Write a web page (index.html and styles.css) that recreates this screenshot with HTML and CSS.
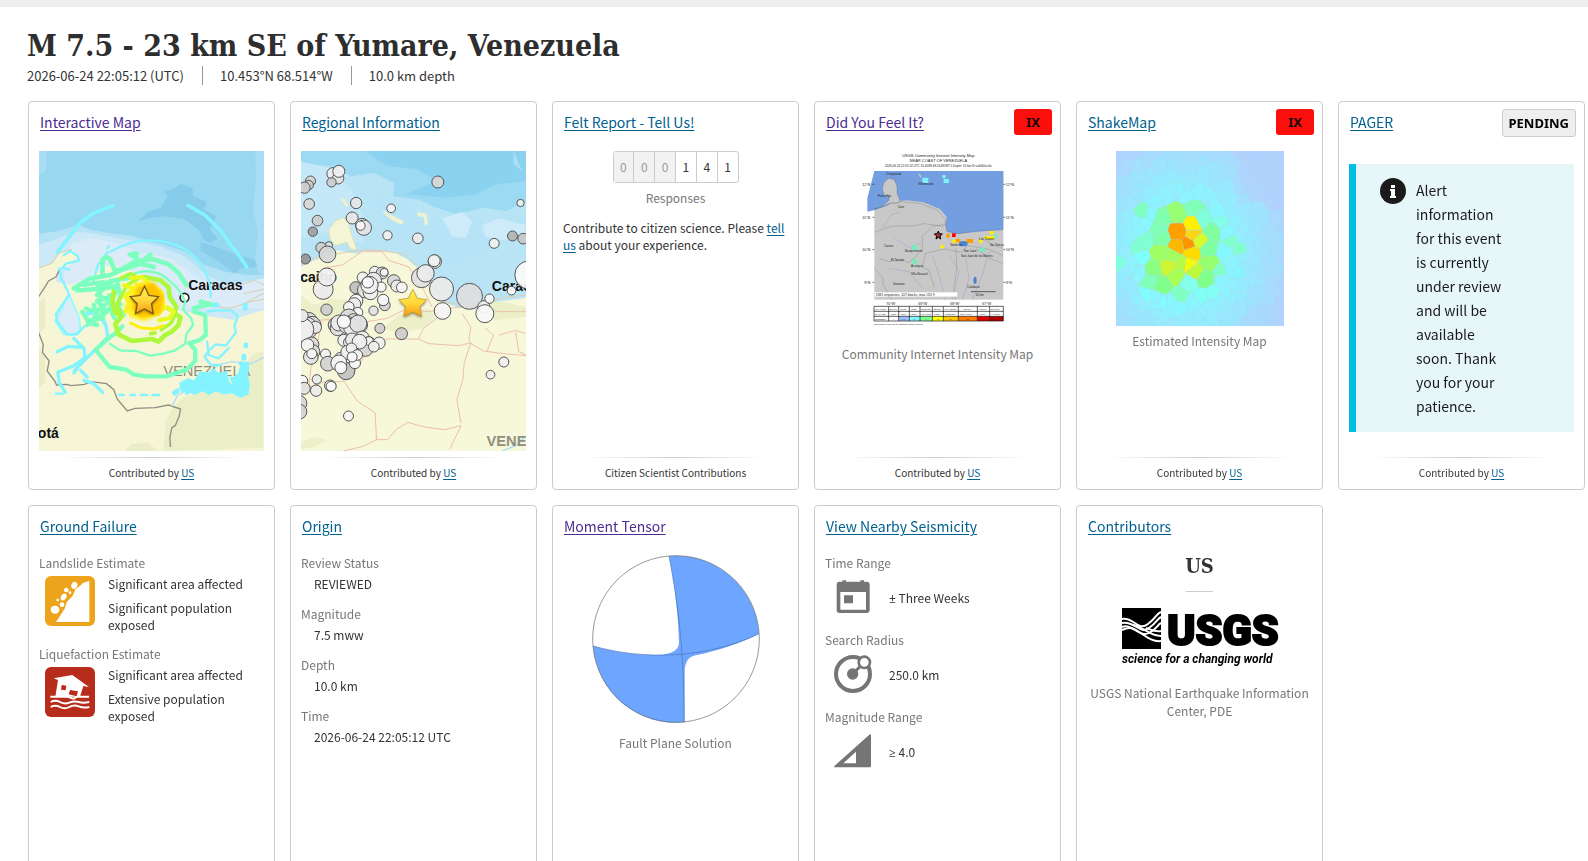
FILE: index.html
```
<!DOCTYPE html>
<html lang="en">

<head>
    <meta charset="UTF-8">
    <meta name="viewport" content="width=device-width, initial-scale=1.0">
    <title>M 7.5 - 23 km SE of Yumare, Venezuela</title>
    <link rel="stylesheet" href="styles.css">
</head>

<body>
    <div class="top-bar"></div>

    <header class="event-header">
        <h1>M 7.5 - 23 km SE of Yumare, Venezuela</h1>
        <ul class="event-details">
            <li>2026-06-24 22:05:12 (UTC)</li>
            <li>10.453°N 68.514°W</li>
            <li>10.0 km depth</li>
        </ul>
    </header>

    <main class="cards">
        <section class="card">
            <div class="card-header"><a class="visited" href="#map">Interactive Map</a></div>
            <div class="card-content">
                <svg class="map" viewBox="54 168 678 900" preserveAspectRatio="xMidYMid slice">
                    <defs>
                        <linearGradient id="star-fill" x1="0" y1="0" x2="0" y2="1">
                            <stop offset="0" stop-color="#fff04a" />
                            <stop offset="0.5" stop-color="#ffd83c" />
                            <stop offset="1" stop-color="#f79a10" />
                        </linearGradient>
                        <filter id="soft" x="-50%" y="-50%" width="200%" height="200%">
                            <feGaussianBlur stdDeviation="5" />
                        </filter>
                    </defs>
                    <rect x="54" y="168" width="678" height="900" fill="#98d7f0" />
                    <!-- sea depth -->
                    <path d="M54 168h26l-4 60-22 10z M705 168h27v400l-30-60 10-100-14-60 8-90z" fill="#a9ddf3" />
                    <path d="M352 380l30-30 40-12 18-32-8-16 30-10 20-14 34 14 2 24 40 16-8 24 38 20-20 40 24 26-22 14-20-10-14-28-44-34-60-8-50 6z" fill="#86cbea" />
                    <path d="M540 440l60 20 60 24 44 10 8 22-50 4-20 18-50-40-52-30z" fill="#8acdeb" />
                    <path d="M54 416l60-8 60-18 30 12 60 12 70 8 60 18 40 10 60 20 60 40 60 20 70 10 48 0v100H54z" fill="#b5e2f5" />
                    <path d="M54 450l60-20 50-20 50 4 70 14 80 14 60 14 70 30 60 50 60 30 70 0 48-6v120H54z" fill="#cde8f7" />
                    <path d="M130 540l20-90 60-20 60 10 90 30 90 20 80 60 80 30 60-20 62-10v90H160z" fill="#dcebf8" />
                    <!-- land -->
                    <path d="M54 520l40-16 22-30 40-10 20 22-30 26-36 8-4 40 40 10 40-12 50-30 20-16 36 2 60 20 60 36 26 44 24 28 60 14 60 10 56 8 60-20 34-10V1068H54z" fill="#f6f6d6" />
                    <path d="M428 1068l8-90 20-40 30-30 60-20 60-10 50-40 40-60 32-10v290z" fill="#ebefc8" />
                    <path d="M54 760l20 20 0 80-20 20z M54 620l20-10 0 90-20 14z M312 1068l20-20 50-6 30 26z" fill="#eaedc8" />
                    <path d="M54 520l42-16 20-30 38-12M660 570l40-14 32 14M670 596l62-14M680 620l52-26M580 634l50 6 60-20 42-8" fill="none" stroke="#d9cdb0" stroke-width="3" />
                    <path d="M54 606l22-34 8-14 22-12 14-26M54 712l14 36-2 24 20 26-6 30 24 32 4 10 30-2 14 4 40-4 20-8 46 6 22 18 10 28 30 36 24-8 60-2 40-8 36 12-4 22-12 28-10 6-6 30 2 28" fill="none" stroke="#8e8e84" stroke-width="4" />
                    <path d="M146 598l30 70 4 34-20 18-30-2-26-40 26-50z" fill="#dcebf8" stroke="#8ff" stroke-width="5" />
                    <path d="M732 786l-40 20-60-6-40 10-60 60-60 30-18 34" fill="none" stroke="#b4dcf0" stroke-width="4" />
                    <text class="map-label" x="503" y="586" font-size="42">Caracas</text>
                    <circle cx="492" cy="608" r="13" fill="#fff" stroke="#222" stroke-width="5" />
                    <text class="map-label" x="52" y="1029" font-size="42">otá</text>
                    <text class="country-label" x="428" y="842" font-size="44">VENEZUELA</text>
                    <!-- intensity contours -->
                    <g fill="none" stroke-linecap="round" stroke-linejoin="round">
                        <g stroke="#83f4ff">
                            <path d="M110 472l36-46 30-40 40-30 60-24M503 332l50 28 50 50 24 36 22 26 30 44" stroke-width="11" />
                            <path d="M270 470q60-36 120-34 100 2 150 70 34 50 30 100M262 470l-30 40-16 60M118 520l4 30 24 48-40 60 4 20 30 40 30 0 20-22 30-16 40-30M130 480l20-12 20 14 6 14-40 10-10 12 20 6M260 460l6-8" stroke-width="7" />
                            <path d="M196 660l30-10 30 40 6 36-40 40-60 60M170 820l-10 14M110 770l34-16 46 4 4 30-34 24-48 20 4 30 18 30M160 730l30 30M180 826l20 20M190 856l30 10 26 26" stroke-width="10" />
                            <path d="M560 650l30-4 40 0 22 16-10 30 4 20-30 40-30-4-20 18-14 20 20 24 30 0M560 740l4 40 30 10 30-30M296 900h14M330 900h14M360 900h20M396 900h20M106 896h20M200 650l50 20 10 40" stroke-width="7" />
                            <path d="M462 894l8-6M484 880l16-12M500 892l20-10M676 750v2M670 784v6M662 806l8 4M640 856l10-10M674 630v10M580 630h10" stroke-width="15" />
                        </g>
                        <path d="M484 890l-6-26 24-12 20 6 16-26 30 2 8-12 20 14 22-6 6 30 16 20-10 14-24 2-20-10-20 12-20-12-24 12-16-10zM630 890l8-24-10-20 22 6 8-30 8-20 18 0 0 20 -4 20 6 26-4 30-24 8z" fill="#83f4ff" stroke="#83f4ff" stroke-width="4" />
                        <g stroke="#7dffc0">
                            <path d="M246 540l0-46 12-8 10 6 16 36 20-6 40-22 50-8 50 16 30 26 24 36M340 476h10M376 490l14-10M540 620l30 8-24 4-26 8M328 478l20 10" stroke-width="14" />
                            <path d="M160 580l50-30 60-10 30-14 60-20 40 10M170 586l60-4 40-24 60-10M230 600l20-20 36-6-10 30-46 14 20 20-10 30 30-30 30-10M210 680l20-20-10-30M186 650l20 34 24 6" stroke-width="14" />
                            <path d="M230 570l40-6 16 30-30 20-20-14M190 570l60-10M196 640l30 10 40-30 20 24M200 690l24-16 24-4M290 560l10 40-10 30 20 30M266 600l10 60 14 20" stroke-width="12" />
                            <path d="M520 650l34 10 2 60-20 16-30 8 18 20 0 34-26 26-60 20-60 0-40-6-20-14-50-8-14-16-16-20-12-16 40-36 20-14 20-20" stroke-width="13" />
                            <path d="M330 540q70-30 120 20 30 24 44 60l-6 24 24 26 6 20-20 26-4 30-30 20-36 10-40 6-40-14-50-2-30-20" stroke-width="7" />
                        </g>
                        <g stroke="#aef83c">
                            <path d="M370 546l50 10 24 20 4 30 20 30-8 20 20 10-6 24-20 20-20 10-20 20-20-8-60 6-40-20-10-30 20-24-22-14-6-30 4-30" stroke-width="14" />
                            <path d="M300 550l30-14 24 14-34 20-16 30-14 30 10 24M440 640l26 14-14 30-30 20M390 716l14-2" stroke-width="11" />
                        </g>
                        <path d="M330 550l34-4 20 16M310 570l30 10-26 24 20 26-20 20M440 636l20 14-14 20-30 6" stroke="#ebfa1e" stroke-width="12" />
                        <path d="M330 640l20 20 60 0 20-20-6-50-40-24-40 10-14 40M330 684l30 14 40 4 30-10M346 566l26 10" stroke="#ffee0a" stroke-width="9" />
                    </g>
                    <path d="M330 580l40-24 44 20 18 46-14 36-46 20-44-12-16-30z" fill="#fff01e" filter="url(#soft)" />
                    <path d="M350 576l50-14 30 44-10 50-60 12-24-30z" fill="#ffc400" filter="url(#soft)" />
                    <path d="M372 580l12 26 30 4-22 20 6 30-26-15-27 15 6-30-21-20 29-4z" fill="#000" opacity="0.45" filter="url(#soft)" />
                    <path d="M372 574l13 27 29 4-21 21 5 30-26-14-27 14 5-30-21-21 30-4z" fill="url(#star-fill)" stroke="#7b5a1e" stroke-width="4" />
                </svg>
            </div>
            <footer class="card-footer">Contributed by <a href="#us">US</a></footer>
        </section>

        <section class="card">
            <div class="card-header"><a href="#region">Regional Information</a></div>
            <div class="card-content">
                <svg class="map" viewBox="45 168 678 900" preserveAspectRatio="xMidYMid slice">
                    <rect x="45" y="168" width="678" height="900" fill="#b9e4f6" />
                    <!-- sea depth -->
                    <path d="M45 168h678v150l-60 30-70-10-80 20-60-20-50-24-80-10 4-40-60-30-70 10-60-30-92-10z" fill="#9bdaf2" />
                    <path d="M240 168h483v90l-90 10-60 30-90 10-120-10 90-40-60-36-90-10z" fill="#8ad2ef" />
                    <path d="M45 200l90 20 60 60 40 90 0 70-60 10-60-40-70 20z" fill="#c4e8f8" />
                    <path d="M250 300l110 14 70 60 100-20 80 30 50-30 63 10v60l-60 10-80 50-100 20-100-60-80-50z" fill="#b7e3f6" />
                    <path d="M470 370l60-20 30 30-20 50-40-6zM590 390l50-20 80 20 0 30-70 16-50-10z" fill="#cdebf9" />
                    <path d="M684 168l26 60-26-20z" fill="#a9e0f4" />
                    <!-- land -->
                    <path d="M45 516l40-20 50-16 20-14 60 10 20-8 40 0 50 4 40 20 40 36 30 30 14 40 20 20 50 20 70 0 60-20 74-10V1068H45z" fill="#f7f7d9" />
                    <path d="M130 404l22-28 20-8 16 10 10 40 16 46-20-2-10-20-36 10-16-24z" fill="#f4f5d4" stroke="#d8d8a8" stroke-width="2" />
                    <path d="M162 306l14 6 14 20-6 4-14-16zM290 344l24 14 40 20-2 12-30-12-24-20zM394 352l28 4 6 30-10 6-4-26-16-2z" fill="#eef2d0" />
                    <path d="M45 600l40 30 60-20 60 10 0 50-70 10-90-10zM290 700l50-40 90-20 20 30-40 30-70 14zM570 630l60-14 93 20v30l-100 10zM45 1040l50-14 30 10-40 20-40 6z" fill="#e8eec4" opacity="0.8" />
                    <path d="M45 512l44-24 60-12 64-8 34-4 50 4 60 10 56 48 28 30 16 60 42 10 90 6 60-24 74-8" fill="none" stroke="#dccfb0" stroke-width="3" />
                    <g fill="none" stroke="#edbfae" stroke-width="3">
                        <path d="M110 520l60-10 60-40 60 0 20 26 60 20 40 60 30 60M45 690l60-14 80-10 60 14 60-10 60-30 60 10 110-16 110 16 78 0" />
                        <path d="M60 880l60-20 50 0 30-20 40-60 60-48 100 0 30 14 90 6 34-8 40 24 60 8 70 6M175 858l40 60 54 36 4 80 34 0 24-30 36-22 50 14 60 8 50-12-34 70" />
                        <path d="M556 744l-20 60-4 50-18 60 12 70M530 656l26 40-6 40 10 12M400 730l14-30 40-30M110 680l-14 60-20 80-6 60M600 700l24 20-20 50M640 720l50-14 30 10M690 710l10 60 23 10M273 1034l-40 20-60 14" />
                    </g>
                    <path d="M650 1068l40-16 33-30" fill="none" stroke="#a9dcf0" stroke-width="4" />
                    <text class="map-label" x="44" y="560" font-size="42">caibo</text>
                    <text class="map-label" x="619" y="588" font-size="42">Caracas</text>
                    <text class="country-label bold" x="603" y="1053" font-size="44">VENEZUELA</text>
                    <g id="quakes" stroke="#555" stroke-width="3"></g>
                    <path d="M382 590l12 25 30 4-22 20 6 30-26-14-27 14 6-30-21-20 30-4z" fill="#000" opacity="0.45" filter="url(#soft)" />
                    <path d="M382 583l13 27 29 4-21 21 5 30-26-14-27 14 5-30-21-21 30-4z" fill="url(#star-fill)" stroke="#b98a2e" stroke-width="2" />
                </svg>
            </div>
            <footer class="card-footer">Contributed by <a href="#us">US</a></footer>
        </section>

        <section class="card">
            <div class="card-header"><a href="#tellus">Felt Report - Tell Us!</a></div>
            <div class="card-content">
                <div class="counter">
                    <span class="empty">0</span><span class="empty">0</span><span class="empty">0</span><span>1</span><span>4</span><span>1</span>
                </div>
                <p class="counter-label">Responses</p>
                <p>Contribute to citizen science. Please <a href="#tellus">tell us</a> about your experience.</p>
            </div>
            <footer class="card-footer">Citizen Scientist Contributions</footer>
        </section>

        <section class="card">
            <div class="card-header">
                <a class="visited" href="#dyfi">Did You Feel It?</a>
                <span class="badge">IX</span>
            </div>
            <figure class="card-content">
                <svg class="dyfi" viewBox="135 168 504 564">
                    <g class="tiny" text-anchor="middle">
                        <text x="388" y="187" font-size="12">USGS Community Internet Intensity Map</text>
                        <text x="388" y="202" font-size="12">NEAR COAST OF VENEZUELA</text>
                        <text x="388" y="215" font-size="9">2026-06-24 22:05:12 UTC 10.453N 68.514W M7.5 Depth: 10 km ID:us6000sz1e</text>
                    </g>
                    <rect x="196" y="228" width="387" height="386" fill="#c8c8c8" />
                    <path d="M196 228h387v176l-80 6-60 8-30-8-4-24 4-20-20-24-50-20-50-6-46 4-12 12-40 14-20 4v-40z" fill="#739ee0" />
                    <path d="M196 342l24-8 20-18 0-14-14 0-6-20 4-18 14-14 18 4 8 20 0 20 10 26-12 6-14-4-20 10z" fill="#c8c8c8" stroke="#667" stroke-width="1" />
                    <path d="M325 232l12 10-2 8z" fill="#c8c8c8" />
                    <g fill="none" stroke="#777" stroke-width="1">
                        <path d="M196 342l50-16 30-6 60 6 50 20 22 28 4 32 30 10 60-8 80-4" />
                        <path d="M196 412l50-18 70-2 30-6 60 8M210 490l30 10 40-6 20 10 40-40 0-40 30-30 40-6M350 476l-10 40 20 10 16 50M346 476l60-14 50 10 20-20 60 10 47 20M196 520l26 30 0 20 20 30 6 14M440 460l4 60-10 60 6 34M500 460l40 30 43 16M520 430l30 20 33 10" />
                    </g>
                    <g fill="none" stroke="#a9a9cf" stroke-width="2">
                        <path d="M220 400l26-40 30-10M370 480l20 60 20 74M420 480l30 50-20 84M470 490l10 60-20 64M240 520l60 10 40 50M256 430l50 30 34-20M540 470l-20 70-30 74" />
                    </g>
                    <g fill="#80f0ff"><path d="M340 248h18v16h-18zM400 240h10v10h-10zM404 252h16v12h-16z" /></g>
                    <g fill="#70f0b8"><path d="M308 450h16v16h-16zM312 492h12v16h-12zM512 458h14v12h-14zM552 418h12v10h-12z" /></g>
                    <g fill="#ffee00"><path d="M430 434h12v10h-12zM510 434h10v10h-10zM394 450h10v10h-10zM542 408h12v10h-12zM526 424h30v8h-30z" /></g>
                    <path d="M412 416h10v12h-10zM440 432h14v10h-14zM472 432h20v12h-20z" fill="#ff9c00" />
                    <path d="M429 415h11v11h-11z" fill="#f00" />
                    <ellipse cx="463" cy="446" rx="13" ry="8" fill="#4a80d0" />
                    <ellipse cx="498" cy="556" rx="5" ry="11" fill="#4a80d0" />
                    <path d="M388 408l3 8 9 1-7 6 2 9-7-5-7 5 2-9-7-6 9-1z" fill="#a33" stroke="#000" stroke-width="3" />
                    <g class="tiny" font-size="9">
                        <text x="232" y="240">Oranjestad</text>
                        <text x="328" y="270">Willemstad</text>
                        <text x="206" y="307">Punto Fijo</text>
                        <text x="266" y="338">Coro</text>
                        <text x="225" y="457">Carora</text>
                        <text x="288" y="470">Barquisimeto</text>
                        <text x="246" y="498">El Tocuyo</text>
                        <text x="306" y="516">Acarigua</text>
                        <text x="306" y="540">Villa Bruzual</text>
                        <text x="252" y="569">Guanare</text>
                        <text x="424" y="453">Valencia</text>
                        <text x="464" y="471">San Juan</text>
                        <text x="456" y="485">San Juan de los Morros</text>
                        <text x="474" y="580">Calabozo</text>
                        <text x="510" y="434">Los Teques</text>
                        <text x="542" y="453">Sta Teresa</text>
                        <text x="500" y="604">50 km</text>
                    </g>
                    <rect x="197" y="592" width="248" height="13" fill="#fff" />
                    <text class="tiny" x="200" y="603" font-size="10">1381 responses, 107 blocks, max CDI 9</text>
                    <path d="M486 590h74" stroke="#222" stroke-width="2" />
                    <g class="tiny" font-size="11">
                        <text x="160" y="273">12°N</text><text x="590" y="273">12°N</text>
                        <text x="160" y="371">11°N</text><text x="590" y="371">11°N</text>
                        <text x="160" y="468">10°N</text><text x="590" y="468">10°N</text>
                        <text x="166" y="566">9°N</text><text x="590" y="566">9°N</text>
                        <text x="232" y="631">70°W</text><text x="328" y="631">69°W</text>
                        <text x="424" y="631">68°W</text><text x="520" y="631">67°W</text>
                    </g>
                    <path d="M190 268h6M190 367h6M190 464h6M190 562h6M583 268h6M583 367h6M583 464h6M583 562h6" stroke="#333" stroke-width="2" />
                    <!-- intensity scale -->
                    <path d="M239 664h30v14h-30z" fill="#fff" />
                    <path d="M269 664h32v14h-32z" fill="#a0c0ff" />
                    <path d="M301 664h32v14h-32z" fill="#80f8ff" />
                    <path d="M333 664h37v14h-37z" fill="#7aff93" />
                    <path d="M370 664h33v14h-33z" fill="#ff0" />
                    <path d="M403 664h45v14h-45z" fill="#ffc800" />
                    <path d="M448 664h57v14h-57z" fill="#ff7c00" />
                    <path d="M505 664h37v14h-37z" fill="#e00000" />
                    <path d="M542 664h41v14h-41z" fill="#b00000" />
                    <path d="M195 634h388v44H195zM195 649h388M195 664h388M239 634v44M269 634v44M301 634v44M333 634v44M370 634v44M403 634v44M448 634v44M505 634v44M542 634v44" fill="none" stroke="#111" stroke-width="2" />
                    <g class="tiny" font-size="7">
                        <text x="199" y="645">SHAKING</text><text x="241" y="645">Not felt</text><text x="274" y="645">Weak</text><text x="307" y="645">Light</text><text x="336" y="645">Moderate</text><text x="374" y="645">Strong</text><text x="406" y="645">Very strong</text><text x="464" y="645">Severe</text><text x="510" y="645">Violent</text><text x="546" y="645">Extreme</text>
                        <text x="199" y="660">DAMAGE</text><text x="246" y="660">none</text><text x="276" y="660">none</text><text x="307" y="660">none</text><text x="336" y="660">Very light</text><text x="376" y="660">Light</text><text x="408" y="660">Moderate</text><text x="452" y="660">Mod./Heavy</text><text x="510" y="660">Heavy</text><text x="546" y="660">V. Heavy</text>
                        <text x="197" y="674">INTENSITY</text><text x="252" y="674">I</text><text x="278" y="674">II-III</text><text x="313" y="674">IV</text><text x="349" y="674">V</text><text x="383" y="674">VI</text><text x="420" y="674">VII</text><text x="470" y="674">VIII</text><text x="519" y="674">IX</text><text x="558" y="674">X+</text>
                        <text x="195" y="690">Processed: Wed Jun 24 23:58:56 2026 vmdyfi1</text>
                    </g>
                </svg>
                <figcaption>Community Internet Intensity Map</figcaption>
            </figure>
            <footer class="card-footer">Contributed by <a href="#us">US</a></footer>
        </section>

        <section class="card">
            <div class="card-header">
                <a href="#shakemap">ShakeMap</a>
                <span class="badge">IX</span>
            </div>
            <figure class="card-content">
                <canvas id="shakemap" class="shakemap" width="168" height="175"></canvas>
                <figcaption>Estimated Intensity Map</figcaption>
            </figure>
            <footer class="card-footer">Contributed by <a href="#us">US</a></footer>
        </section>

        <section class="card">
            <div class="card-header">
                <a href="#pager">PAGER</a>
                <span class="badge pending">PENDING</span>
            </div>
            <div class="card-content">
                <div class="alert">
                    <svg class="info-icon" viewBox="0 0 26 26">
                        <circle cx="13" cy="13" r="13" fill="#1b1b1b" />
                        <path d="M11 7h4v3h-4zM10 11h5v7h1v2h-6v-2h1v-5h-1z" fill="#fff" />
                    </svg>
                    <p>Alert information for this event is currently under review and will be available soon. Thank you for your patience.</p>
                </div>
            </div>
            <footer class="card-footer">Contributed by <a href="#us">US</a></footer>
        </section>

        <section class="card">
            <div class="card-header"><a href="#ground-failure">Ground Failure</a></div>
            <div class="card-content">
                <h2 class="label">Landslide Estimate</h2>
                <div class="estimate">
                    <svg class="hazard-icon" viewBox="75 243 150 150">
                        <rect x="75" y="243" width="150" height="150" rx="18" fill="#eea31c" />
                        <path d="M108 381l26-40 6-20 18-18 8-20 16-12 8-8 18-5v123z" fill="#fff" />
                        <g fill="#fff">
                            <ellipse cx="163" cy="271" rx="9" ry="11" transform="rotate(20 163 271)" />
                            <circle cx="139" cy="285" r="7" />
                            <circle cx="150" cy="293" r="4" />
                            <ellipse cx="131" cy="306" rx="8" ry="11" transform="rotate(30 131 306)" />
                            <circle cx="113" cy="315" r="4" />
                            <circle cx="126" cy="329" r="7" />
                            <ellipse cx="105" cy="344" rx="13" ry="12" />
                        </g>
                    </svg>
                    <ul>
                        <li>Significant area affected</li>
                        <li>Significant population exposed</li>
                    </ul>
                </div>
                <h2 class="label">Liquefaction Estimate</h2>
                <div class="estimate">
                    <svg class="hazard-icon" viewBox="75 516 150 150">
                        <rect x="75" y="516" width="150" height="150" rx="18" fill="#b72c1a" />
                        <path d="M101 550l56-10 50 36-17-3-10 32H106l8-50z" fill="#fff" />
                        <path d="M125 570l14 2-2 14-14-2zM150 585l24 4-4 15-24-6z" fill="#b72c1a" />
                        <path d="M91 605h50l20 6 10-6h36" fill="none" stroke="#fff" stroke-width="6" />
                        <path d="M92 621q14-8 28 0t28 2 28-2 32 0M92 636q14-8 28 0t28 0 28-2 32 2" fill="none" stroke="#fff" stroke-width="6" />
                    </svg>
                    <ul>
                        <li>Significant area affected</li>
                        <li>Extensive population exposed</li>
                    </ul>
                </div>
            </div>
        </section>

        <section class="card">
            <div class="card-header"><a href="#origin">Origin</a></div>
            <div class="card-content">
                <dl class="origin">
                    <dt>Review Status</dt>
                    <dd>REVIEWED</dd>
                    <dt>Magnitude</dt>
                    <dd>7.5 mww</dd>
                    <dt>Depth</dt>
                    <dd>10.0 km</dd>
                    <dt>Time</dt>
                    <dd>2026-06-24 22:05:12 UTC</dd>
                </dl>
            </div>
        </section>

        <section class="card">
            <div class="card-header"><a class="visited" href="#moment-tensor">Moment Tensor</a></div>
            <figure class="card-content">
                <svg class="beachball" viewBox="139 181 504 504">
                    <circle cx="391" cy="433" r="250" fill="#fff" />
                    <path d="M370 184A250 250 0 0 1 640 417C580 448 520 466 450 482Q418 488 417 530V683A250 250 0 0 1 142 454C210 474 280 484 350 480Q396 476 400 446C398 360 386 260 370 184z" fill="#6ea6ff" />
                    <path d="M370 184C390 290 416 440 415 683M142 454C290 496 480 494 640 417" fill="none" stroke="#4c73b2" stroke-width="2" />
                    <circle cx="391" cy="433" r="250" fill="none" stroke="#666" stroke-width="2" />
                </svg>
                <figcaption class="spaced">Fault Plane Solution</figcaption>
            </figure>
        </section>

        <section class="card">
            <div class="card-header"><a href="#nearby">View Nearby Seismicity</a></div>
            <div class="card-content">
                <h2 class="label">Time Range</h2>
                <div class="range">
                    <svg viewBox="72 245 126 126" fill="#757575">
                        <path d="M94 262h9v-4h11v4h43v-4h11v4h8q9 0 9 9v76q0 9-9 9H95q-9 0-9-9v-76q0-9 8-9zM97 293v53h77v-53zM108 303h27v24h-27z" fill-rule="evenodd" />
                    </svg>
                    <p><span class="sign">±</span> Three Weeks</p>
                </div>
                <h2 class="label">Search Radius</h2>
                <div class="range">
                    <svg viewBox="72 477 126 126" fill="#757575">
                        <circle cx="135" cy="540" r="51" fill="none" stroke="#757575" stroke-width="12" />
                        <circle cx="134" cy="540" r="17" />
                        <path d="M134 540l28-28" stroke="#757575" stroke-width="9" />
                        <circle cx="169" cy="505" r="17" fill="#fff" stroke="#757575" stroke-width="8" />
                    </svg>
                    <p>250.0 km</p>
                </div>
                <h2 class="label">Magnitude Range</h2>
                <div class="range">
                    <svg viewBox="72 707 126 126" fill="#757575">
                        <path d="M184 721q5-4 5 2v92q0 4-4 4H82q-6 0-2-5zM144 772l-38 35h38z" fill-rule="evenodd" />
                    </svg>
                    <p><span class="sign">≥</span> 4.0</p>
                </div>
            </div>
        </section>

        <section class="card">
            <div class="card-header"><a href="#contributors">Contributors</a></div>
            <figure class="card-content">
                <h2 class="contributor">US</h2>
                <svg class="usgs" viewBox="0 0 156 60">
                    <rect width="39" height="41" fill="#000" />
                    <g fill="none" stroke="#fff" stroke-width="2">
                        <path d="M0 11C12 9 16 24 26 16S34 6 39 4" />
                        <path d="M0 15C12 12 18 27 27 20S35 11 39 9" />
                        <path d="M0 19C10 15 18 30 27 25S35 17 39 15" />
                        <path d="M0 22C10 17 14 22 20 26S32 34 39 33" />
                        <path d="M10 17C20 17 26 28 39 28M24 20C30 22 32 24 39 23" />
                    </g>
                    <text class="usgs-name" x="45" y="37">USGS</text>
                    <text class="usgs-tag" x="0" y="55">science for a changing world</text>
                </svg>
                <figcaption>USGS National Earthquake Information Center, PDE</figcaption>
            </figure>
        </section>
    </main>

    <script src="script.js"></script>
</body>

</html>
```
FILE: styles.css
```
* {
    margin: 0;
    padding: 0;
    box-sizing: border-box;
}

body {
    background-color: #fff;
    color: #333;
    font-family: "Noto Sans CJK SC", "Open Sans", sans-serif;
    font-size: 12px;
    line-height: 17px;
}

a {
    color: #00618f;
    text-underline-offset: 2px;
}

a.visited {
    color: #4c2c92;
}

ul {
    list-style: none;
}

.top-bar {
    height: 7px;
    background-color: #eee;
}

.event-header {
    padding: 20px 27px 0;
}

.event-header h1 {
    font-family: "DejaVu Serif Condensed", "DejaVu Serif", serif;
    font-size: 30px;
    line-height: 38px;
    color: #2e2e2e;
}

.event-details {
    display: flex;
    padding-top: 1px;
    font-size: 13px;
    line-height: 19px;
}

.event-details li + li {
    margin-left: 18px;
    padding-left: 17px;
    border-left: 1px solid #999;
}

/* Card grid */
.cards {
    display: grid;
    grid-template-columns: repeat(6, 1fr);
    grid-auto-rows: 1fr;
    gap: 15px;
    padding: 16px 3px 15px 28px;
}

.card {
    display: flex;
    flex-direction: column;
    border: 1px solid #ccc;
    border-radius: 4px;
}

.card-header {
    display: flex;
    justify-content: space-between;
    align-items: flex-start;
    height: 49px;
    padding: 7px 8px 0 11px;
    font-size: 14px;
    line-height: 26px;
}

.card-content {
    padding: 0 10px;
}

.card-footer {
    margin-top: auto;
    padding: 8px 0;
    font-size: 10px;
    line-height: 16px;
    text-align: center;
    background: linear-gradient(to right, transparent 12%, #ccc 50%, transparent 88%) top / 100% 1px no-repeat;
}

.badge {
    padding: 0 12px;
    border-radius: 3px;
    background-color: #fa0f0c;
    color: #1b0000;
    font-family: "Noto Sans", sans-serif;
    font-size: 13px;
    font-weight: bold;
}

.badge.pending {
    padding: 0 6px;
    border: 1px solid #ccc;
    background-color: #eee;
    color: #000;
}

/* Maps */
.map {
    display: block;
    width: 100%;
    height: 300px;
    margin-bottom: 6px;
}

.map-label {
    font-family: "Liberation Sans", sans-serif;
    font-weight: bold;
    fill: #111;
}

.country-label {
    font-family: "Liberation Sans", sans-serif;
    fill: #8f8f80;
}

.country-label.bold {
    font-weight: bold;
}

.tiny {
    font-family: "Liberation Sans", sans-serif;
    fill: #222;
}

figure {
    text-align: center;
}

figure svg,
figure canvas {
    display: block;
    margin: 0 auto 6px;
}

figcaption {
    color: #777;
    line-height: 18px;
}

figcaption.spaced {
    padding-top: 5px;
}

.dyfi {
    width: 168px;
    height: 188px;
}

.shakemap {
    width: 168px;
    height: 175px;
}

.beachball {
    width: 168px;
    height: 168px;
}

/* Felt report */
.counter {
    display: flex;
    width: 126px;
    margin: 0 auto;
    border: 1px solid #ccc;
    border-radius: 3px;
    line-height: 30px;
    text-align: center;
}

.counter span {
    flex: 1;
}

.counter span + span {
    border-left: 1px solid #ccc;
}

.counter .empty {
    background-color: #f2f2f2;
    color: #999;
}

.counter-label {
    padding: 6px 0 13px;
    color: #777;
    text-align: center;
}

/* Pager alert */
.alert {
    display: flex;
    align-items: flex-start;
    margin-top: 13px;
    padding: 14px 66px 14px 24px;
    border-left: 7px solid #00bde3;
    background-color: #e7f6f8;
    color: #1b1b1b;
    font-size: 14px;
    line-height: 24px;
}

.info-icon {
    flex: none;
    width: 26px;
    height: 26px;
    margin-right: 10px;
}

/* Summary lists */
.label,
.origin dt {
    color: #777;
    font-size: 12px;
    font-weight: normal;
    line-height: 15px;
}

.estimate {
    display: flex;
    gap: 13px;
    padding: 5px 0 13px 6px;
}

.estimate li + li {
    margin-top: 7px;
}

.hazard-icon {
    flex: none;
    width: 50px;
    height: 50px;
    margin-top: 1px;
}

.origin dd {
    margin: 5px 0 14px 13px;
}

.range {
    display: flex;
    align-items: center;
    gap: 15px;
    height: 54px;
    margin-bottom: 8px;
    padding-left: 7px;
}

.range svg {
    width: 42px;
    height: 42px;
}

.sign {
    font-family: "Open Sans", sans-serif;
    line-height: 1;
}

/* Contributors */
.contributor {
    display: flex;
    justify-content: center;
    width: 27px;
    margin: 0 auto 16px;
    padding-bottom: 13px;
    border-bottom: 1px solid #ccc;
    font-family: "DejaVu Serif Condensed", "DejaVu Serif", serif;
    font-size: 20px;
    line-height: 23px;
}

.usgs {
    width: 156px;
    height: 60px;
    overflow: visible;
}

.usgs + figcaption {
    padding-top: 10px;
}

.usgs-name {
    font-family: Roboto, sans-serif;
    font-size: 43px;
    font-weight: 900;
    stroke: #000;
    stroke-width: 2px;
}

.usgs-tag {
    font-family: Roboto, sans-serif;
    font-size: 12px;
    font-style: italic;
    font-weight: bold;
}
```
FILE: script.js
```
// Past earthquakes: x, y, radius, grey level
const quakes = [
    [75, 258, 15, 210], [70, 270, 14, 200], [57, 278, 17, 205], [142, 236, 18, 235], [158, 250, 17, 225], [138, 262, 14, 205], [160, 229, 18, 240],
    [457, 261, 18, 215], [71, 327, 16, 215], [212, 324, 17, 230], [317, 340, 13, 245], [705, 324, 11, 240], [96, 377, 16, 205], [82, 410, 14, 160],
    [200, 369, 18, 230], [230, 390, 20, 235], [235, 398, 23, 230], [225, 392, 14, 245], [306, 421, 14, 240], [397, 430, 16, 235], [626, 445, 15, 240],
    [681, 423, 15, 180], [713, 431, 16, 200], [130, 451, 11, 220], [107, 458, 16, 205], [126, 478, 25, 215], [60, 492, 15, 150], [448, 500, 20, 235],
    [446, 497, 18, 240], [408, 548, 30, 225], [420, 535, 26, 235], [468, 582, 36, 235], [552, 604, 39, 222], [730, 540, 42, 250], [678, 587, 13, 250],
    [471, 648, 25, 245], [595, 635, 18, 240], [612, 611, 14, 245], [598, 656, 27, 248], [113, 583, 30, 235], [124, 546, 27, 240], [123, 644, 17, 205],
    [268, 530, 16, 240], [290, 534, 18, 215], [296, 532, 12, 245], [232, 548, 17, 240], [325, 558, 19, 215], [334, 573, 18, 235], [349, 577, 16, 245],
    [211, 578, 18, 190], [264, 556, 24, 235], [287, 576, 15, 245], [240, 585, 24, 225], [255, 592, 22, 240], [252, 570, 26, 240], [247, 562, 17, 250],
    [298, 631, 16, 210], [293, 615, 17, 245], [264, 647, 14, 225], [212, 618, 20, 245], [206, 628, 20, 235], [190, 636, 16, 245], [283, 700, 15, 205],
    [348, 716, 18, 205], [217, 652, 15, 245], [222, 690, 24, 225], [190, 668, 26, 220], [205, 680, 24, 225], [150, 690, 22, 215], [156, 700, 22, 225],
    [160, 684, 24, 235], [186, 690, 26, 235], [200, 696, 26, 235], [218, 686, 26, 225], [175, 680, 20, 250], [68, 680, 28, 220], [80, 690, 26, 215],
    [62, 700, 34, 225], [90, 697, 18, 235], [50, 704, 35, 238], [50, 662, 18, 235], [78, 748, 22, 215], [82, 770, 21, 220], [76, 786, 22, 225],
    [66, 750, 19, 245], [79, 776, 15, 245], [120, 777, 15, 240], [175, 736, 18, 240], [190, 742, 16, 235], [200, 734, 20, 235], [230, 730, 22, 235],
    [250, 745, 20, 215], [240, 762, 22, 215], [250, 738, 13, 245], [222, 740, 22, 240], [281, 744, 18, 240], [265, 755, 16, 240], [127, 806, 22, 210],
    [182, 828, 26, 195], [165, 790, 18, 235], [188, 772, 22, 240], [198, 760, 16, 240], [208, 804, 17, 245], [215, 780, 16, 245], [200, 786, 15, 250],
    [160, 804, 24, 245], [166, 818, 18, 250], [50, 858, 17, 245], [94, 853, 14, 235], [56, 880, 18, 225], [92, 887, 17, 235], [134, 872, 17, 230],
    [137, 874, 15, 250], [40, 925, 24, 215], [42, 950, 22, 210], [189, 963, 15, 245], [655, 801, 15, 240], [615, 839, 13, 240]
];

const quakeLayer = document.getElementById("quakes");
quakes.forEach(([x, y, r, grey]) => {
    const circle = document.createElementNS("http://www.w3.org/2000/svg", "circle");
    circle.setAttribute("cx", x);
    circle.setAttribute("cy", y);
    circle.setAttribute("r", r);
    circle.setAttribute("fill", `rgba(${grey}, ${grey}, ${grey}, 0.94)`);
    quakeLayer.appendChild(circle);
});

// Stations with a strong intensity: x, y, colour
const stations = [
    [61, 81, [255, 160, 0]], [77, 73, [255, 240, 0]], [61, 95, [255, 184, 0]], [72, 92, [255, 150, 0]],
    [75, 101, [255, 220, 0]], [72, 113, [242, 250, 10]], [82, 89, [215, 250, 40]], [77, 84, [250, 215, 20]], [61, 62, [150, 255, 115]],
    [76, 56, [128, 255, 185]], [96, 79, [128, 255, 160]], [92, 98, [128, 255, 160]], [44, 101, [158, 255, 100]], [56, 104, [160, 255, 95]],
    [60, 124, [165, 255, 85]], [53, 115, [205, 245, 50]], [65, 112, [180, 250, 70]], [45, 134, [128, 255, 140]], [36, 118, [140, 255, 130]],
    [89, 127, [128, 255, 140]], [78, 120, [190, 250, 60]], [93, 111, [150, 255, 110]], [64, 144, [128, 255, 195]], [27, 61, [128, 255, 195]],
    [44, 67, [128, 255, 175]], [42, 77, [128, 255, 185]], [116, 90, [128, 255, 205]], [124, 97, [128, 255, 205]], [20, 96, [128, 255, 210]],
    [3, 112, [128, 255, 225]], [23, 106, [128, 255, 255]], [109, 101, [132, 248, 255]], [34, 129, [128, 255, 185]], [105, 120, [128, 255, 200]],
    [72, 131, [132, 255, 235]], [28, 88, [128, 255, 210]], [45, 86, [128, 255, 170]], [86, 68, [128, 255, 215]], [104, 70, [128, 255, 230]],
    [30, 145, [130, 252, 255]], [47, 152, [130, 252, 255]], [85, 146, [130, 255, 245]], [97, 142, [130, 255, 245]], [122, 121, [130, 245, 255]]
];

// Fill the rest of the area with weaker cells
let seed = 7;
function random() {
    seed = (seed * 16807) % 2147483647;
    return seed / 2147483647;
}

const cells = stations.slice();
while (cells.length < 240) {
    const x = random() * 168;
    const y = random() * 175;
    const nearest = Math.min(...cells.map(cell => Math.hypot(cell[0] - x, cell[1] - y)));
    const inside = Math.hypot(x - 68, (y - 98) * 0.9) < 46;
    if (nearest < 6 || (inside && nearest < 16)) continue;
    const distance = Math.hypot(x - 68, (y - 100) * 0.9) + (x > 120 && y < 50 ? 16 : 0);
    const t = Math.max(0, Math.min(1, (distance - 40) / 70 + (random() - 0.5) * 0.12));
    cells.push([x, y, [132 + t * 45, 250 - t * 40, 255]]);
}

const canvas = document.getElementById("shakemap");
const context = canvas.getContext("2d");
const image = context.createImageData(168, 175);
for (let y = 0; y < 175; y++) {
    for (let x = 0; x < 168; x++) {
        let first = 1e9;
        let second = 1e9;
        let color;
        cells.forEach(cell => {
            const distance = Math.hypot(cell[0] - x, cell[1] - y);
            if (distance < first) {
                second = first;
                first = distance;
                color = cell[2];
            } else if (distance < second) {
                second = distance;
            }
        });
        const edge = second - first < 1 ? 0.35 : 0;
        const i = (y * 168 + x) * 4;
        image.data[i] = color[0] + (170 - color[0]) * edge;
        image.data[i + 1] = color[1] + (215 - color[1]) * edge;
        image.data[i + 2] = color[2] + (225 - color[2]) * edge;
        image.data[i + 3] = 255;
    }
}
context.putImageData(image, 0, 0);
```
